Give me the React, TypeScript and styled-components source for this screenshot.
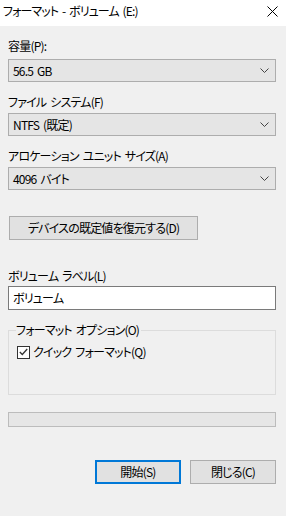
import React from "react";
import styled, { createGlobalStyle } from "styled-components";

const Global = createGlobalStyle`
  html, body { margin: 0; padding: 0; background: #f0f0f0; }
  body {
    font-family: "Noto Sans CJK JP", "Noto Sans", sans-serif;
    font-size: 12px;
    font-feature-settings: "palt" 1;
    letter-spacing: -0.8px;
    word-spacing: 2px;
    color: #000;
    width: 286px;
    height: 516px;
    overflow: hidden;
  }
`;

const Window = styled.div`
  width: 286px;
  height: 516px;
  background: #f0f0f0;
  display: flex;
  flex-direction: column;
`;

const TitleBar = styled.div`
  height: 26px;
  background: #fff;
  display: flex;
  align-items: center;
  justify-content: space-between;
  padding: 0 8px 0 3px;
  box-sizing: border-box;
  flex-shrink: 0;
`;

const TitleText = styled.span`
  font-size: 12px;
  line-height: 16px;
  margin-top: -4px;
  letter-spacing: -0.9px;
  word-spacing: 2px;
`;

const CloseIcon = styled.svg`
  width: 11px;
  height: 11px;
  margin-top: -4px;
`;

const Body = styled.div`
  display: flex;
  flex-direction: column;
  padding: 0 10px 0 8px;
`;

const Label = styled.div<{ $mt: number }>`
  margin-top: ${(p) => p.$mt}px;
  height: 16px;
  line-height: 16px;
  font-size: 12px;
  white-space: nowrap;
`;

const Select = styled.div<{ $mt: number }>`
  margin-top: ${(p) => p.$mt}px;
  height: 23px;
  box-sizing: border-box;
  border: 1px solid #adadad;
  background: #e5e5e5;
  display: flex;
  align-items: center;
  justify-content: space-between;
  padding: 0 6px 0 4px;
  font-size: 12px;
  line-height: 16px;
`;

const Chevron = styled.svg`
  width: 9px;
  height: 5px;
`;

const Button = styled.div<{ $primary?: boolean }>`
  height: 24px;
  box-sizing: border-box;
  border: ${(p) => (p.$primary ? "2px solid #0078d7" : "1px solid #adadad")};
  background: #e1e1e1;
  display: flex;
  align-items: center;
  justify-content: center;
  font-size: 12px;
  line-height: 16px;
  white-space: nowrap;
`;

const ResetButton = styled(Button)`
  margin-top: 26px;
  margin-left: 1px;
  width: 189px;
`;

const TextInput = styled.div`
  margin-top: 2px;
  height: 24px;
  box-sizing: border-box;
  border: 1px solid #7a7a7a;
  background: #fff;
  display: flex;
  align-items: center;
  padding: 0 4px;
  font-size: 12px;
  line-height: 16px;
`;

const Group = styled.fieldset`
  margin: 12px 0 0 0;
  padding: 4px 8px 0 8px;
  height: 73px;
  box-sizing: border-box;
  border: 1px solid #dcdcdc;
  border-radius: 0;
  min-width: 0;
`;

const Legend = styled.legend`
  padding: 0 2px 0 0;
  margin-left: -1px;
  font-size: 12px;
  line-height: 16px;
  white-space: nowrap;
`;

const CheckRow = styled.label`
  display: flex;
  align-items: center;
  gap: 3px;
  margin-top: 2px;
  font-size: 12px;
  line-height: 16px;
`;

const Box = styled.span`
  width: 13px;
  height: 13px;
  box-sizing: border-box;
  border: 1px solid #333;
  background: #fff;
  display: flex;
  align-items: center;
  justify-content: center;
`;

const Progress = styled.div`
  margin-top: 17px;
  height: 15px;
  box-sizing: border-box;
  border: 1px solid #bcbcbc;
  background: #e6e6e6;
`;

const Footer = styled.div`
  margin-top: 33px;
  display: flex;
  justify-content: flex-end;
  gap: 9px;
`;

const FooterButton = styled(Button)`
  width: 86px;
`;

const ChevronDown = () => (
  <Chevron viewBox="0 0 9 5">
    <path d="M0.5 0.5 L4.5 4.5 L8.5 0.5" stroke="#444" strokeWidth="1" fill="none" />
  </Chevron>
);

export default function App() {
  return (
    <Window>
      <Global />
      <TitleBar>
        <TitleText>フォーマット - ボリューム (E:)</TitleText>
        <CloseIcon viewBox="0 0 11 11">
          <path d="M0.5 0.5 L10.5 10.5 M10.5 0.5 L0.5 10.5" stroke="#000" strokeWidth="1" fill="none" />
        </CloseIcon>
      </TitleBar>
      <Body>
        <Label $mt={12}>容量(P):</Label>
        <Select $mt={5}>
          <span>56.5 GB</span>
          <ChevronDown />
        </Select>
        <Label $mt={12}>ファイル システム(F)</Label>
        <Select $mt={3}>
          <span>NTFS (既定)</span>
          <ChevronDown />
        </Select>
        <Label $mt={12}>アロケーション ユニット サイズ(A)</Label>
        <Select $mt={3}>
          <span>4096 バイト</span>
          <ChevronDown />
        </Select>
        <ResetButton>デバイスの既定値を復元する(D)</ResetButton>
        <Label $mt={28}>ボリューム ラベル(L)</Label>
        <TextInput>ボリューム</TextInput>
        <Group>
          <Legend>フォーマット オプション(O)</Legend>
          <CheckRow>
            <Box>
              <svg width="9" height="8" viewBox="0 0 9 8">
                <path d="M0.8 4 L3.3 6.5 L8.2 1" stroke="#333" strokeWidth="1.3" fill="none" />
              </svg>
            </Box>
            クイック フォーマット(Q)
          </CheckRow>
        </Group>
        <Progress />
        <Footer>
          <FooterButton $primary>開始(S)</FooterButton>
          <FooterButton>閉じる(C)</FooterButton>
        </Footer>
      </Body>
    </Window>
  );
}
